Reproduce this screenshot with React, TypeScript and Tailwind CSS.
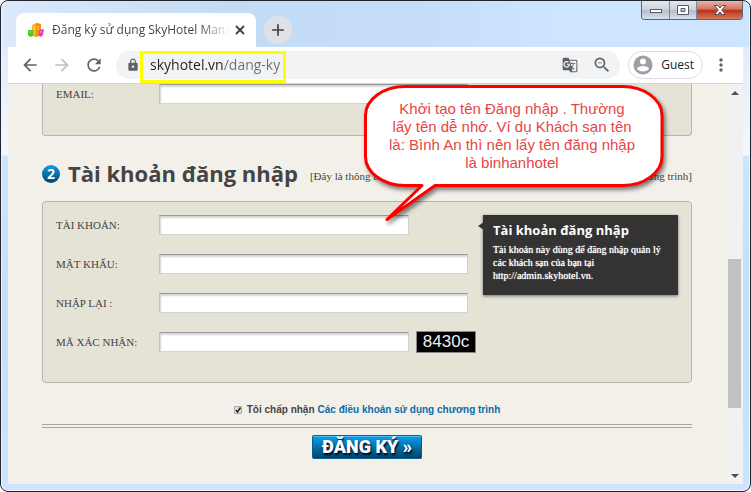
import React from "react";
import {
  MdAdd,
  MdArrowBack,
  MdArrowForward,
  MdGTranslate,
  MdLock,
  MdMoreVert,
  MdRefresh,
  MdZoomOut,
} from "react-icons/md";

const inputClass =
  "h-5 border border-t-[#999] border-l-[#c4c3bf] border-r-[#d0cfcb] border-b-[#d4d3ce] bg-white px-1 text-xs shadow-[inset_1px_2px_2px_#d4d4d4] outline-none";

type FieldProps = {
  id: string;
  label: string;
  type?: string;
  short?: boolean;
  children?: React.ReactNode;
};

const Field: React.FC<FieldProps> = ({ id, label, type = "text", short, children }) => (
  <div className="flex h-5 items-center">
    <label htmlFor={id} className="w-[103px] shrink-0 whitespace-nowrap">
      {label}
    </label>
    <input id={id} type={type} className={`${inputClass} ${short ? "w-[250px]" : "w-[309px]"}`} />
    {children}
  </div>
);

const HotelIcon: React.FC = () => (
  <svg width="16" height="16" viewBox="0 0 16 16" className="shrink-0">
    <path d="M4 3 8 1l5 1v11l-5 2-4-1z" fill="#fbb02a" />
    <path d="M8 1l5 1v11l-5 2z" fill="#f0930c" />
    <path d="M5 5h2M5 7h2M9 5h2M9 7h2" stroke="#ffd978" />
    <path d="M0 8h5v6l-3 1-2-2z" fill="#3fd11c" />
    <path d="M11 8l5-1-1 6-2 2-2-1z" fill="#e33bd6" />
    <path d="M1 10h2M12 10h2" stroke="#fff" strokeOpacity=".5" />
  </svg>
);

const GuestIcon: React.FC = () => (
  <svg width="20" height="20" viewBox="0 0 20 20" className="shrink-0">
    <circle cx="10" cy="10" r="9.5" fill="#9aa0a6" />
    <circle cx="10" cy="6.500" r="3" fill="#fff" />
    <path d="M4 14c0-2 3.500-3 6-3s6 1 6 3c-1.500 1.500-3.500 2.500-6 2.500s-4.500-1-6-2.500z" fill="#fff" />
  </svg>
);

const WindowControls: React.FC = () => (
  <div className="flex h-[19px] w-[102px] shrink-0 overflow-hidden rounded-b-[4px] border border-t-0 border-[#5b6674]">
    <button
      aria-label="Minimize"
      className="flex w-7 items-center justify-center border-r border-[#7d8896] bg-[linear-gradient(#e4e8ec,#ccd3da_48%,#b3bdc8_52%,#d6e2ee)]"
    >
      <svg width="14" height="12" viewBox="0 0 14 12">
        <rect x="1.5" y="5.5" width="11" height="3" fill="#fff" stroke="#565b66" />
      </svg>
    </button>
    <button
      aria-label="Maximize"
      className="flex w-[27px] items-center justify-center border-r border-[#7d8896] bg-[linear-gradient(#e4e8ec,#ccd3da_48%,#b3bdc8_52%,#d6e2ee)]"
    >
      <svg width="12" height="12" viewBox="0 0 12 12">
        <path d="M.5 1.5h11v9H.5zM4 4.500h4v3H4z" fill="#fff" fillRule="evenodd" stroke="#565b66" />
      </svg>
    </button>
    <button
      aria-label="Close"
      className="flex flex-1 items-center justify-center bg-[linear-gradient(#e8b5a8,#d3735f_45%,#b93219_52%,#d9775a)]"
    >
      <svg width="14" height="12" viewBox="0 0 14 12">
        <path d="M1.500 1.500h3.200L7 4l2.300-2.500h3.200L8.800 6l3.700 4.500H9.300L7 8l-2.300 2.500H1.500L5.200 6z" fill="#fff" stroke="#5a4a50" />
      </svg>
    </button>
  </div>
);

const TabStrip: React.FC = () => (
  <div className="flex h-[46px] items-end">
    <div className="ml-2 flex h-[34px] w-60 shrink-0 items-center rounded-t-lg bg-white pr-2 pl-3">
      <HotelIcon />
      <span className="ml-2 w-[178px] bg-[linear-gradient(to_right,#3c4043_83%,#fff)] bg-clip-text text-xs whitespace-nowrap text-transparent">
        Đăng ký sử dụng SkyHotel Mana
      </span>
      <button aria-label="Close tab" className="ml-1">
        <svg width="12" height="12" viewBox="0 0 12 12">
          <path d="M2 2l8 8M10 2l-8 8" stroke="#3c4043" strokeWidth="1.800" />
        </svg>
      </button>
    </div>
    <button
      aria-label="New tab"
      className="mb-[3px] ml-2 flex size-7 items-center justify-center rounded-full bg-[#dee1e6] text-[#3c4043]"
    >
      <MdAdd size={20} />
    </button>
    <div className="ml-auto self-start">
      <WindowControls />
    </div>
  </div>
);

const Toolbar: React.FC = () => (
  <div className="flex h-[37px] items-center border-b border-[#d3d4d6] bg-white px-3 text-[#5f6368]">
    <button aria-label="Back">
      <MdArrowBack size={20} />
    </button>
    <button aria-label="Forward" className="ml-3 text-[#bdc1c6]">
      <MdArrowForward size={20} />
    </button>
    <button aria-label="Reload" className="ml-3">
      <MdRefresh size={20} />
    </button>
    <div className="ml-3 flex h-7 flex-1 items-center rounded-full bg-[#f1f3f4] pr-2 pl-[10px]">
      <MdLock size={14} className="shrink-0" />
      <div className="-mb-1 flex h-8 w-[146px] shrink-0 items-center border-3 border-[#ff0] pb-1 pl-[7px]">
        <input
          aria-label="Address"
          defaultValue="skyhotel.vn/dang-ky"
          className="w-full bg-[linear-gradient(to_right,#202124_74px,#6b6f74_74px)] bg-clip-text text-sm text-transparent outline-none"
        />
      </div>
      <button aria-label="Translate" className="ml-auto">
        <MdGTranslate size={16} />
      </button>
      <button aria-label="Zoom" className="ml-[14px]">
        <MdZoomOut size={20} />
      </button>
    </div>
    <button className="ml-2 flex h-7 items-center rounded-full border border-[#dadce0] pr-2 pl-1 text-xs text-[#202124]">
      <GuestIcon />
      <span className="ml-2">Guest</span>
    </button>
    <button aria-label="Menu" className="ml-2">
      <MdMoreVert size={20} />
    </button>
  </div>
);

const Callout: React.FC = () => (
  <div className="absolute top-0 left-[356px] h-[140px] w-[304px]">
    <svg
      width="304"
      height="140"
      viewBox="0 0 304 140"
      className="absolute inset-0 drop-shadow-[2px_3px_2px_rgba(0,0,0,0.5)]"
    >
      <path
        d="M41 2.500H258A39.500 29 0 0 1 298 31.500V72.500A39.500 29 0 0 1 258 101.500H71L23 135.500L58 101.500H41A39.500 29 0 0 1 1.500 72.500V31.500A39.500 29 0 0 1 41 2.500Z"
        fill="#fff"
        stroke="#f00"
        strokeWidth="3"
        strokeLinejoin="round"
      />
    </svg>
    <p className="relative pt-4 pr-2 text-center font-['Liberation_Sans',sans-serif] text-[15px] leading-[18px] whitespace-nowrap text-[#e84545]">
      Khởi tạo tên Đăng nhập . Thường
      <br />
      lấy tên dễ nhớ. Ví dụ Khách sạn tên
      <br />
      là: Bình An thì nên lấy tên đăng nhập
      <br />
      là binhanhotel
    </p>
  </div>
);

const ScrollBar: React.FC = () => (
  <div className="flex w-[17px] shrink-0 flex-col items-center bg-[#f1f1f1]">
    <button aria-label="Scroll up" className="flex h-[17px] items-center">
      <svg width="8" height="4" viewBox="0 0 8 4">
        <path d="M0 4l4-4 4 4z" fill="#505050" />
      </svg>
    </button>
    <div className="flex-[158]" />
    <div className="w-[13px] flex-[149] bg-[#c1c1c1]" />
    <div className="flex-[59]" />
    <button aria-label="Scroll down" className="flex h-[17px] items-center">
      <svg width="8" height="4" viewBox="0 0 8 4">
        <path d="M0 0l4 4 4-4z" fill="#505050" />
      </svg>
    </button>
  </div>
);

const App: React.FC = () => {
  return (
    <div className="flex min-h-screen flex-col rounded-lg border border-[#20242e] bg-[linear-gradient(to_bottom,#d9e8fb_0px,#e4effc_70px,#f3f8ff_154px,#cde4ff_155px,#c5ddf6_320px,#cde4ff_100%)] font-['Open_Sans','Noto_Sans',sans-serif] shadow-[inset_0_0_0_1px_#eef6ff]">
      <div className="mx-px flex flex-1 flex-col rounded-t-lg bg-[linear-gradient(to_right,#dbe9fb,#c3dcf5_30%,#c5ddf6_55%,#cee5ff_75%,#cee5ff)] bg-size-[100%_46px] bg-no-repeat px-[6px] pb-[7px]">
        <TabStrip />
        <Toolbar />

        <div className="flex flex-1 bg-[#f3f0e9]">
          <main className="relative min-w-0 flex-1 px-[34px] pb-6 text-[#444]">
            <form onSubmit={(e) => e.preventDefault()} className="font-['Liberation_Serif',serif] text-[11px]">
              {/* Contact info */}
              <div className="h-[52px] rounded-b-[4px] border border-t-0 border-[#b5b5b3] bg-[#e5e2d6] px-[13px]">
                <Field id="email" label="EMAIL:" />
              </div>

              {/* Account heading */}
              <div className="flex h-[65px] items-center pt-[10px]">
                <span className="flex size-[18px] shrink-0 items-center justify-center rounded-full bg-linear-to-b from-[#0d9ee6] to-[#00466e] font-['Open_Sans',sans-serif] text-sm font-bold text-white">
                  2
                </span>
                <h1 className="ml-2 shrink-0 font-['Open_Sans',sans-serif] text-[22px] font-bold whitespace-nowrap">
                  Tài khoản đăng nhập
                </h1>
                <div className="ml-3 flex flex-1 justify-between pt-[6px] whitespace-nowrap">
                  <span>[Đây là thông tin</span>
                  <span>chương trình]</span>
                </div>
              </div>

              {/* Account fields */}
              <div className="flex gap-[7px] rounded-[4px] border border-[#b5b5b3] bg-[#e5e2d6] px-[13px] pt-[13px] pb-[30px]">
                <div className="flex w-[420px] shrink-0 flex-col gap-[19px]">
                  <Field id="username" label="TÀI KHOẢN:" short />
                  <Field id="password" label="MẬT KHẨU:" type="password" />
                  <Field id="confirm" label="NHẬP LẠI :" type="password" />
                  <Field id="captcha" label="MÃ XÁC NHẬN:" short>
                    <span className="ml-[7px] flex h-[22px] w-[60px] shrink-0 items-center justify-center border border-[#888] bg-black font-['Liberation_Sans',sans-serif] text-[17px] text-[#eee]">
                      8430c
                    </span>
                  </Field>
                </div>

                <aside className="relative h-20 min-w-0 flex-1 bg-[#333] px-[10px] pt-1 text-white shadow-[0_1px_3px_rgba(0,0,0,0.5)]">
                  <svg width="6" height="8" viewBox="0 0 6 8" className="absolute top-[7px] -left-[5px]">
                    <path d="M0 4l6-4v8z" fill="#333" />
                  </svg>
                  <h2 className="font-['Open_Sans',sans-serif] text-[13px] leading-[22px] font-bold whitespace-nowrap">
                    Tài khoản đăng nhập
                  </h2>
                  <p className="mt-[2px] text-[10px] leading-[13px] text-shadow-[0_0_1px_#fff]">
                    Tài khoản này dùng để đăng nhập quản lý
                    <br />
                    các khách sạn của bạn tại
                    <br />
                    http://admin.skyhotel.vn.
                  </p>
                </aside>
              </div>

              {/* Terms */}
              <div className="flex h-[41px] items-center justify-center pt-3 font-['Liberation_Sans',sans-serif] text-[10px] font-bold">
                <span className="relative mr-[5px] flex">
                  <input
                    id="terms"
                    type="checkbox"
                    defaultChecked
                    className="peer size-2 appearance-none rounded-[1px] border border-[#aaa] bg-[#ddd]"
                  />
                  <svg
                    width="8"
                    height="8"
                    viewBox="0 0 8 8"
                    className="pointer-events-none absolute inset-0 opacity-0 peer-checked:opacity-100"
                  >
                    <path d="M2 4l1.500 2L6.500 1.500" fill="none" stroke="#222" strokeWidth="1.500" />
                  </svg>
                </span>
                <label htmlFor="terms">Tôi chấp nhận</label>
                <a href="#terms" className="ml-[3px] text-[#0a6ca8]">
                  Các điều khoản sử dụng chương trình
                </a>
              </div>

              <div className="h-1 border-y border-[#a5a5a8]" />

              <div className="flex justify-center pt-[7px]">
                <button
                  type="submit"
                  className="h-6 w-[110px] rounded-[2px] border border-[#075d8f] border-t-[#04689f] bg-linear-to-b from-[#0aa0ef] to-[#014468] font-['Roboto',sans-serif] text-lg leading-[22px] font-black whitespace-nowrap text-white shadow-[inset_0_1px_0_#49bbf5] text-shadow-[1px_2px_2px_#002]"
                >
                  ĐĂNG KÝ »
                </button>
              </div>
            </form>
            <Callout />
          </main>
          <ScrollBar />
        </div>
      </div>
    </div>
  );
};

export default App;
